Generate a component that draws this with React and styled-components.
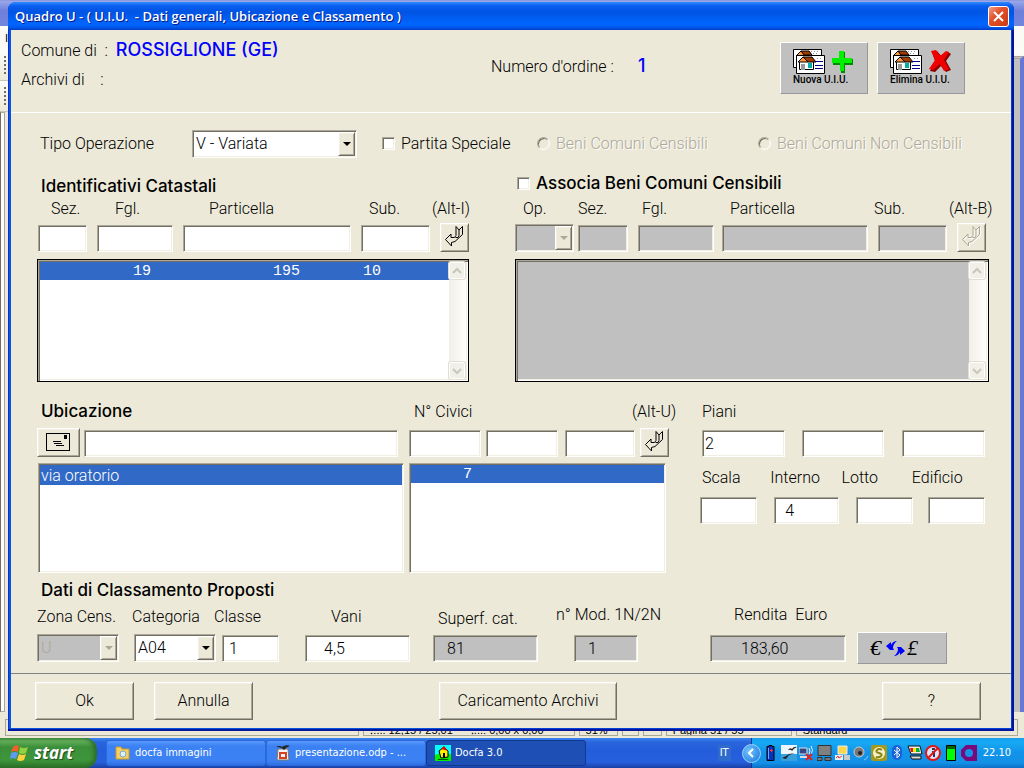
import React from "react";
import styled, { createGlobalStyle, css } from "styled-components";

const face = "#ece9d8";
const grey = "#c0c0c0";
const shade = "#aca899";
const dark = "#716f64";
const highlight = "#316ac6";

const GlobalStyle = createGlobalStyle`
  * {
    box-sizing: border-box;
  }

  body {
    margin: 0;
    background: ${face};
    color: #000;
    font: 300 16px/20px Roboto, "Liberation Sans", sans-serif;
  }

  button,
  input,
  select {
    margin: 0;
    border-radius: 0;
    color: inherit;
    font: inherit;
  }
`;

const sunken = css`
  border: 1px solid;
  border-color: ${shade} #fff #fff ${shade};
  box-shadow: inset 1px 1px 0 ${dark}, inset -1px -1px 0 #f1efe2;
`;

const raised = css`
  border: 1px solid;
  border-color: #fff ${dark} ${dark} #fff;
  box-shadow: inset 1px 1px 0 #f1efe2, inset -1px -1px 0 ${shade};
`;

const Page = styled.div`
  display: flex;
  flex-direction: column;
  min-height: 100vh;
`;

const Desktop = styled.main`
  position: relative;
  flex: 1;
  display: flex;
  padding: 2px 10px 7px 8px;
`;

/* application left open behind the dialog */

const Backdrop = styled.div`
  position: absolute;
  inset: 0;
  display: flex;
  flex-direction: column;
  overflow: hidden;
  background: ${face};
`;

const BackTitle = styled.div`
  height: 26px;
  border-top: 1px solid #8c9ae0;
  background: linear-gradient(#9aa8ea, #6d7edb 40%, #7386de);
`;

const BackMenu = styled.div`
  height: 24px;
  padding-left: 5px;
  background: #fbfaf6;
  font: 400 11px/24px "Liberation Sans", sans-serif;
`;

const BackTools = styled.div`
  height: 31px;
  padding: 6px 0 6px 4px;
  border-bottom: 1px solid #c9c6b6;
  background: linear-gradient(#fdfdfb, ${face});
`;

const Grip = styled.div`
  width: 2px;
  height: 100%;
  background: repeating-linear-gradient(${dark} 0 2px, transparent 2px 4px);
`;

const BackBody = styled.div`
  flex: 1;
  display: flex;
  justify-content: space-between;
`;

const BackRuler = styled.div`
  width: 5px;
  border: 1px solid ${shade};
  border-left-color: ${dark};
  background: #fff;
`;

const BackEdge = styled.div`
  width: 10px;
  margin-top: -56px;
  border-top: 3px double ${shade};
  border-right: 4px solid #6876d4;
  background: ${grey};
`;

const StatusBar = styled.div`
  display: grid;
  grid-template-columns: 354fr 211fr 39fr 17fr 19fr 126fr 222fr;
  column-gap: 4px;
  height: 26px;
  padding: 7px 6px 2px 5px;
  font: 400 11px/20px "Liberation Sans", sans-serif;
  white-space: nowrap;
`;

const StatusCell = styled.div`
  display: flex;
  gap: 18px;
  min-width: 0;
  padding: 0 6px;
  overflow: hidden;
  border: 1px solid ${shade};
`;

/* dialog */

const Dialog = styled.section`
  position: relative;
  flex: 1;
  display: flex;
  flex-direction: column;
  border-radius: 8px 8px 0 0;
  background: linear-gradient(
    90deg,
    #0831d9 0 1px,
    #0855dd 1px 50%,
    #0640d8 50% calc(100% - 2px),
    #001599 calc(100% - 2px)
  );
  box-shadow: inset 0 -2px 0 #001599;
`;

const TitleBar = styled.header`
  display: flex;
  align-items: center;
  justify-content: space-between;
  height: 28px;
  padding: 0 5px 0 7px;
  border-radius: 8px 8px 0 0;
  background: linear-gradient(
    #2f8dff 0,
    #0a5df0 4px,
    #0054e3 10px,
    #0066ff 22px,
    #005bf0 25px,
    #003dc8 28px
  );
`;

const Title = styled.h1`
  margin: 0;
  color: #fff;
  font: 600 13px/18px "Open Sans", sans-serif;
  text-shadow: 1px 1px 0 #0a1883;
  white-space: pre;
`;

const CloseButton = styled.button`
  display: grid;
  place-items: center;
  width: 21px;
  height: 21px;
  padding: 0;
  border: 1px solid #fff;
  border-radius: 3px;
  background: linear-gradient(135deg, #f0a088, #e2512c 40%, #c93a12);
`;

const Body = styled.form`
  flex: 1;
  display: flex;
  flex-direction: column;
  margin: 0 3px 3px;
  background: ${face};
`;

const Header = styled.div`
  display: grid;
  grid-template-columns: 1fr 289px auto;
  height: 83px;
  padding: 11px 46px 0 10px;
  border-bottom: 1px solid #fff;
`;

const HeaderLines = styled.div`
  display: flex;
  flex-direction: column;
  gap: 9px;
  white-space: pre;
`;

const Strong = styled.strong`
  margin-left: 4px;
  color: #00f;
  font: 500 18px/18px Inter, sans-serif;
`;

const OrderNumber = styled.div`
  display: flex;
  gap: 20px;
  padding-top: 16px;
`;

const ImageButtons = styled.div`
  display: flex;
  gap: 9px;
  padding-top: 1px;
`;

const ImageButton = styled.button`
  display: flex;
  flex-direction: column;
  width: 88px;
  height: 52px;
  padding: 6px 12px;
  border: 1px solid;
  border-color: #fff #98989c #98989c #fff;
  background: ${grey};
  font: 500 10px/12px Roboto, sans-serif;
  text-align: left;
  white-space: nowrap;
`;

const OperationRow = styled.div`
  display: grid;
  grid-template-columns: 152fr 190fr 155fr 221fr 242fr;
  align-items: center;
  height: 61px;
  padding: 0 11px 0 29px;
`;

const Choice = styled.label`
  display: flex;
  align-items: center;
  gap: 6px;
  white-space: nowrap;
  ${(p) =>
    p.$disabled &&
    css`
      color: ${shade};
      text-shadow: 1px 1px 0 #fff;
    `}

  input {
    appearance: none;
    width: 13px;
    height: 13px;
    background: #fff;
    ${sunken}
    ${(p) => p.$disabled && "background: #ece9d8; border-radius: 50%;"}
  }
`;

const Heading = styled.h2`
  margin: 0;
  color: #000;
  font: 500 17px/18px Inter, sans-serif;
`;

const Columns = styled.div`
  display: grid;
  grid-template-columns: 432fr 474fr;
  column-gap: 46px;
  padding: 0 22px 0 26px;
`;

const Panel = styled.section`
  display: flex;
  flex-direction: column;
`;

const PanelTitle = styled.div`
  height: 25px;
  padding: ${(p) => (p.$raise ? "0 2px" : "3px 4px 0")};
`;

const FieldGrid = styled.div`
  display: grid;
  grid-template-columns: ${(p) => p.$tracks};
  padding-left: ${(p) => p.$inset || 0}px;
`;

const Field = styled.div`
  display: flex;
  flex-direction: column;
  justify-content: space-between;
  min-width: 0;
  height: ${(p) => p.$height || 53}px;
  padding-right: ${(p) => p.$gap || 0}px;
`;

const FieldLabel = styled.label`
  margin-left: ${(p) => p.$indent || 0}px;
  white-space: pre;
`;

const Input = styled.input`
  width: 100%;
  height: 27px;
  padding: 0 0 0 ${(p) => p.$pad || 4}px;
  outline: 0;
  background: ${(p) => (p.$grey ? grey : "#fff")};
  ${sunken}
`;

const ComboBox = styled.div`
  display: flex;
  width: ${(p) => (p.$wide ? `${p.$wide}px` : "100%")};
  height: 28px;
  padding: 1px;
  background: ${(p) => (p.$disabled ? grey : "#fff")};
  color: ${(p) => (p.$disabled ? shade : "#000")};
  ${sunken}

  select {
    appearance: none;
    flex: 1;
    min-width: 0;
    padding: 0 2px;
    border: 0;
    outline: 0;
    opacity: 1;
    background: transparent;
    color: inherit;
  }
`;

const ComboArrow = styled.span`
  display: grid;
  place-items: center;
  width: 17px;
  background: ${face};
  pointer-events: none;
  ${raised}

  &::after {
    content: "";
    border: solid transparent;
    border-width: 4px 4px 0;
    border-top-color: ${(p) => (p.$disabled ? shade : "#000")};
  }
`;

const SmallButton = styled.button`
  display: grid;
  place-items: center;
  width: ${(p) => p.$wide || 29}px;
  height: 29px;
  padding: 0;
  background: ${face};
  color: ${(p) => (p.disabled ? shade : "#000")};
  ${raised}

  svg {
    filter: ${(p) => (p.disabled ? "drop-shadow(1px 1px 0 #fff)" : "none")};
  }
`;

const ListFrame = styled.div`
  display: flex;
  height: 123px;
  margin-top: 7px;
  padding: 2px;
  border: 1px solid #000;
  background: ${(p) => (p.$grey ? grey : "#fff")};
  box-shadow: inset 1px 1px 0 ${shade}, inset 2px 2px 0 ${dark},
    inset -1px -1px 0 #fff, inset -2px -2px 0 #f1efe2;
`;

const PlainList = styled.div`
  height: 110px;
  margin: 6px ${(p) => p.$gap}px 0 ${(p) => p.$inset || 0}px;
  padding: 1px;
  background: #fff;
  ${sunken}
`;

const List = styled.ul`
  flex: 1;
  margin: 0;
  padding: 0;
  list-style: none;
`;

const ListRow = styled.li`
  display: grid;
  grid-template-columns: ${(p) => p.$tracks || "1fr"};
  padding: 1px 1px 0;
  background: ${highlight};
  color: #fff;
  font: ${(p) =>
    p.$mono
      ? '400 15px/17px "Liberation Mono", monospace'
      : "300 16px/19px Roboto, sans-serif"};
`;

const ScrollBar = styled.div`
  display: flex;
  flex-direction: column;
  justify-content: space-between;
  width: 17px;
  background: linear-gradient(90deg, #f1efe8, #fefefb);
`;

const ScrollButton = styled.button`
  display: grid;
  place-items: center;
  width: 16px;
  height: 17px;
  padding: 0;
  border: 1px solid #fff;
  border-radius: 2px;
  background: #f1f0e8;
  box-shadow: 0 0 0 1px #e2dfd0;
  color: #c9c7ba;
`;

const LocationGrid = styled.div`
  display: grid;
  grid-template-columns: 372fr 291fr 290fr;
  padding: 20px 21px 0 26px;
`;

const Floors = styled.section`
  display: flex;
  flex-direction: column;
  gap: 11px;
  padding-right: 5px;
`;

const Classing = styled.section`
  padding: 8px 20px 0 26px;

  h2 {
    padding-left: 4px;
  }
`;

const ClassGrid = styled.div`
  display: grid;
  grid-template-columns: 97fr 88fr 83fr 128fr 141fr 136fr 147fr 134fr;
  align-items: end;
  margin-top: 6px;

  & > div {
    margin-bottom: 2px;
  }
`;

const CurrencyButton = styled(ImageButton)`
  width: 90px;
  height: 32px;
  padding: 3px 12px;
`;

const Footer = styled.footer`
  display: grid;
  grid-template-columns: 404fr 443fr 99px;
  margin-top: auto;
  padding: 8px 30px 8px 24px;
  border-top: 1px solid #808080;
`;

const ButtonGroup = styled.div`
  display: flex;
  gap: 20px;
`;

const PushButton = styled.button`
  width: ${(p) => (p.$wide ? 178 : 99)}px;
  height: 38px;
  background: ${face};
  ${raised}
`;

/* taskbar */

const TaskBar = styled.nav`
  display: flex;
  height: 30px;
  background: linear-gradient(
    #3a85f0 0,
    #2a66dd 4px,
    #245ddb 12px,
    #2660dd 24px,
    #1941a5 30px
  );
  color: #fff;
  font: 400 11px/14px "DejaVu Sans Condensed", "DejaVu Sans", sans-serif;
`;

const StartButton = styled.button`
  display: flex;
  align-items: center;
  gap: 5px;
  width: 97px;
  margin-right: 9px;
  padding: 0 0 0 10px;
  border: 0;
  border-radius: 0 12px 12px 0;
  background: linear-gradient(
    #4f9b4b 0,
    #62b05c 3px,
    #3c8f3a 9px,
    #3d963b 22px,
    #2b7029
  );
  box-shadow: inset -3px 0 4px #2a6b28;
  color: #fff;
  font: italic 700 17px/24px "Open Sans", sans-serif;
  text-shadow: 1px 1px 1px #1d4b1b;
`;

const Task = styled.button`
  display: flex;
  align-items: center;
  gap: 4px;
  width: 160px;
  height: 26px;
  margin-top: 2px;
  padding: 0 8px;
  border: 1px solid ${(p) => (p.$active ? "#12398f" : "#2b68dc")};
  border-radius: 3px;
  background: ${(p) =>
    p.$active
      ? "#1e4fb5"
      : "linear-gradient(#5a9bfb, #3c81f3 5px, #3c81f3 20px, #2f6fe2)"};
  white-space: nowrap;
`;

const Language = styled.span`
  align-self: center;
  margin: 0 20px 0 auto;
  padding: 1px 2px;
  background: #2f6bcc;
`;

const Tray = styled.div`
  display: flex;
  align-items: center;
  gap: 2px;
  padding-right: 13px;
  border-left: 1px solid #0b3c8c;
  background: linear-gradient(
    #1c9df0 0,
    #17aaf3 4px,
    #1194ea 14px,
    #1290e6 25px,
    #0d6fc4
  );
`;

const TrayToggle = styled.button`
  display: grid;
  place-items: center;
  width: 19px;
  height: 19px;
  margin-left: -10px;
  padding: 0;
  border: 1px solid #9fd4fb;
  border-radius: 50%;
  background: radial-gradient(circle at 6px 6px, #6fc3fb, #1a74dd);
`;

const Clock = styled.time`
  margin-left: 4px;
`;

const ReturnIcon = () => (
  <svg width="27" height="27" viewBox="1 1 27 27" fill="none" stroke="currentColor">
    <path d="M5.5 16.5 11 11v3.500h3.500l1.500-2V3.500l3 3.500 3.500-3.500v8L15 18.500l-3.500 1V23Z" />
    <path d="M15.500 14.500h2.500l1-2V7" />
  </svg>
);

const EnvelopeIcon = () => (
  <svg width="25" height="19" viewBox="0 0 25 19" stroke="#000" fill="none">
    <rect x="0.5" y="0.5" width="23" height="17" />
    <path d="M7 8.500h8M8 10.500h8M10 12.500h8" />
    <path d="M18 2h3v4h-3z" fill="#000" stroke="none" />
  </svg>
);

const House = () => (
  <>
    <path d="M.5.5h28v18H.5z" fill="#fff" stroke="#000" />
    <path d="m3 7 5-5 5 5z" fill="#ff9a3c" stroke="#000" />
    <path d="M8 2h8l3 4h-8z" fill="#a03c00" stroke="#000" />
    <path d="M18 2.500h8M20 4.500h6" stroke="#999" strokeDasharray="1 2" />
    <path d="M3.500 6.500h28v18h-28z" fill="#fff" stroke="#000" />
    <path d="M6.500 12.500h14v8h-14z" fill="#fff" stroke="#000" />
    <path d="m5 13 5-5 5 5z" fill="#ff9a3c" stroke="#000" />
    <path d="M10 8h9l4 5h-8z" fill="#a03c00" stroke="#000" />
    <path d="M8 15h4v6H8z" fill="#999" />
    <path d="M15 14h4v5h-4z" fill="#00b0a8" />
    <path d="M24 9.500h6" stroke="#999" strokeDasharray="1 2" />
    <path d="M22 12.500h8M22 16.500h8M22 19.500h8" stroke="#00008b" />
  </>
);

const NewIcon = () => (
  <svg width="62" height="25" viewBox="0 0 62 25">
    <House />
    <path d="M47 3h5v7h8v6h-8v8h-4v-8h-8v-4h7z" fill="#008a00" />
    <path d="M46 2h5v7h8v5h-8v8h-4v-8h-8V9h7z" fill="#00f000" />
  </svg>
);

const DeleteIcon = () => (
  <svg width="62" height="25" viewBox="0 0 62 25">
    <House />
    <path d="m42 3 5-1 5 6 6-5 3 2-5 7 5 9-5 2-5-6-6 6-5-1 5-10z" fill="#8b0000" />
    <path d="m41 2 5-1 4 6 6-5 3 1-5 8 5 9-5 2-4-7-7 6-4-1 6-9z" fill="#f00000" />
  </svg>
);

const swapArrow = "m16 10 5-4v3q2-4 6-4-4 3-4 7l1 2h-4z";

const CurrencyIcon = () => (
  <svg
    width="52"
    height="24"
    viewBox="0 0 52 24"
    fontFamily="Liberation Serif"
    fontStyle="italic"
    fontWeight="400"
    fontSize="22"
  >
    <text x="0" y="19">€</text>
    <path d={swapArrow} fill="#00f" />
    <path d={swapArrow} fill="#00f" transform="rotate(180 25.5 12.5)" />
    <text x="37" y="19">£</text>
  </svg>
);

const Chevron = ({ down }) => (
  <svg width="10" height="8" viewBox="0 0 10 8" fill="none" stroke="currentColor" strokeWidth="2">
    <path d={down ? "m1 2 4 4 4-4" : "m1 6 4-4 4 4"} />
  </svg>
);

const Flag = () => (
  <svg width="19" height="18" viewBox="0 0 19 18">
    <path d="M3 3q3-3 6-1L8 8Q5 6 1 8z" fill="#f0602c" />
    <path d="M10 3q4 2 8 0l-2 6q-4 2-7 0z" fill="#8fd13f" />
    <path d="M1 9q4-2 7 0l-2 6q-3-2-6 0z" fill="#5d9bf0" />
    <path d="M9 10q3 2 7 0l-2 6q-4 2-7 0z" fill="#ffd23c" />
  </svg>
);

const trayIcons = [
  <g key="battery">
    <path d="M4 1.500h2v-1h3v1h2v14H4z" fill="#0a32b8" stroke="#000" />
    <path d="M5 3h1v11H5z" fill="#6fa8ff" />
    <path d="M7 5.500h3M8.500 4v3" stroke="#f33" />
  </g>,
  <g key="office">
    <path d="M0 0h16v16H0z" fill="#eef6fb" />
    <path d="M0 9h16v7H0z" fill="#3aa0dc" />
    <path d="M7 5q2-3 4-1 2-3 5-2-3 1-5 4-1-2-4-1M1 13q5-2 7-4l6-1-6 2-3 4z" fill="#222" />
  </g>,
  <g key="network">
    <path d="M0 3h8v6H0z" fill="#35477e" stroke="#dfe4f4" />
    <path d="M1 11h7v2H1z" fill="#ddd" />
    <path d="M10 3q2 3 0 6M12 1q3 4 0 9" fill="none" stroke="#eee" />
    <path d="m7 9 6 6m0-6-6 6" stroke="#d22" strokeWidth="2" />
  </g>,
  <g key="display">
    <path d="M1 .5h13v10H1z" fill="#808080" stroke="#333" />
    <path d="M0 12.500h5v3H0zM8 12.500h6v3H8z" fill="#777" stroke="#333" />
  </g>,
  <g key="power">
    <path d="M3 1h9v8H3z" fill="#ffd54a" stroke="#eee" />
    <path d="M0 10h8v5H0z" fill="#eee" />
    <path d="m1 13 2-2 1 2 3-2" stroke="#e33" fill="none" />
    <path d="M9 10h6v5H9z" fill="#c9c9c9" />
  </g>,
  <g key="volume">
    <circle cx="6" cy="7" r="5" fill="#777" stroke="#ccc" />
    <circle cx="7" cy="8" r="2" fill="#222" />
    <path d="M11 15q3-1 4-4" stroke="#8ec8ff" fill="none" />
  </g>,
  <g key="sync">
    <rect width="16" height="16" rx="2" fill="#a39a1c" />
    <circle cx="8" cy="8" r="6" fill="#f3f0cc" />
    <path d="M11 5Q8 3 6 5t2 3 2 3-5 1" stroke="#8d8410" strokeWidth="2" fill="none" />
  </g>,
  <g key="bluetooth">
    <rect x="3" y="0" width="10" height="15" rx="5" fill="#1762d8" />
    <path d="m5 5 6 5-3 3V2l3 3-6 5" stroke="#fff" fill="none" />
  </g>,
  <g key="graphics">
    <path d="M1 1h12l2 8H4z" fill="#eee" stroke="#111" />
    <path d="M3 3h3v4H4z" fill="#e11" />
    <path d="M6 3h3v4H6z" fill="#ee1" />
    <path d="M9 3h3l1 4H9z" fill="#1a3" />
    <path d="M3 11h11v3H5z" fill="#ddd" stroke="#111" />
  </g>,
  <g key="blocked">
    <circle cx="8" cy="8" r="7" fill="#dbe4f8" stroke="#e01818" strokeWidth="2" />
    <path d="M7 4h3M7 7h2v5" stroke="#335" strokeWidth="2" fill="none" />
    <path d="M13 3 3 13" stroke="#e01818" strokeWidth="2" />
  </g>,
  <g key="meter">
    <path d="M3.500.5h9v15h-9z" fill="#060" stroke="#000" />
    <path d="M4 4h8v11H4z" fill="#0f0" />
  </g>,
  <g key="assistant">
    <path d="M0 5 5 0h11v16H5l-5-5z" fill="#7a0a7c" />
    <circle cx="8" cy="8" r="4" fill="#1492e8" />
  </g>,
];

const TextField = ({ id, label, indent, gap, height, inputLabel, ...rest }) => (
  <Field $gap={gap} $height={height}>
    <FieldLabel htmlFor={id} $indent={indent}>
      {label}
    </FieldLabel>
    <Input id={id} aria-label={inputLabel} {...rest} />
  </Field>
);

const Combo = ({ id, value, wide, disabled }) => (
  <ComboBox $wide={wide} $disabled={disabled}>
    <select id={id} disabled={disabled} defaultValue={value}>
      <option>{value}</option>
    </select>
    <ComboArrow $disabled={disabled} />
  </ComboBox>
);

const InsertButton = ({ hint, label, height, indent, disabled }) => (
  <Field $height={height}>
    <FieldLabel as="span" $indent={indent}>
      {hint}
    </FieldLabel>
    <SmallButton type="button" aria-label={label} disabled={disabled}>
      <ReturnIcon />
    </SmallButton>
  </Field>
);

const Scroll = () => (
  <ScrollBar>
    <ScrollButton type="button" aria-label="Su">
      <Chevron />
    </ScrollButton>
    <ScrollButton type="button" aria-label="Giù">
      <Chevron down />
    </ScrollButton>
  </ScrollBar>
);

const Background = () => (
  <Backdrop>
    <BackTitle />
    <BackMenu>I</BackMenu>
    <BackTools>
      <Grip />
    </BackTools>
    <BackTools>
      <Grip />
    </BackTools>
    <BackBody>
      <BackRuler />
      <BackEdge />
    </BackBody>
    <StatusBar>
      <StatusCell />
      <StatusCell>
        <span>⁝...: 12,15 / 25,01</span>
        <span>⁝...: 0,00 x 0,00</span>
      </StatusCell>
      <StatusCell>51%</StatusCell>
      <StatusCell />
      <StatusCell />
      <StatusCell>Pagina 51 / 55</StatusCell>
      <StatusCell>Standard</StatusCell>
    </StatusBar>
  </Backdrop>
);

const DialogHeader = () => (
  <Header>
    <HeaderLines>
      <div>
        {"Comune di  : "}
        <Strong>ROSSIGLIONE (GE)</Strong>
      </div>
      <div>{"Archivi di    :"}</div>
    </HeaderLines>
    <OrderNumber>
      <span>Numero d'ordine :</span>
      <Strong>1</Strong>
    </OrderNumber>
    <ImageButtons>
      <ImageButton type="button">
        <NewIcon />
        Nuova U.I.U.
      </ImageButton>
      <ImageButton type="button">
        <DeleteIcon />
        Elimina U.I.U.
      </ImageButton>
    </ImageButtons>
  </Header>
);

const Operation = () => (
  <OperationRow>
    <label htmlFor="tipo">Tipo Operazione</label>
    <Combo id="tipo" value="V - Variata" wide={165} />
    <Choice>
      <input type="checkbox" />
      Partita Speciale
    </Choice>
    <Choice $disabled>
      <input type="radio" name="beni" disabled />
      Beni Comuni Censibili
    </Choice>
    <Choice $disabled>
      <input type="radio" name="beni" disabled />
      Beni Comuni Non Censibili
    </Choice>
  </OperationRow>
);

const Identification = () => (
  <Columns>
    <Panel>
      <PanelTitle>
        <Heading>Identificativi Catastali</Heading>
      </PanelTitle>
      <FieldGrid $tracks="59fr 86fr 178fr 79fr 29px" $inset={1}>
        <TextField id="sez" label="Sez." indent={13} gap={10} />
        <TextField id="fgl" label="Fgl." indent={18} gap={10} />
        <TextField id="particella" label="Particella" indent={26} gap={10} />
        <TextField id="sub" label="Sub." indent={8} gap={10} />
        <InsertButton hint="(Alt-I)" indent={-8} label="Inserisci identificativo" />
      </FieldGrid>
      <ListFrame>
        <List>
          <ListRow $mono $tracks="92px 140px 90px 1fr">
            <span />
            <span>19</span>
            <span>195</span>
            <span>10</span>
          </ListRow>
        </List>
        <Scroll />
      </ListFrame>
    </Panel>
    <Panel>
      <PanelTitle $raise>
        <Choice>
          <input type="checkbox" />
          <Heading as="span">Associa Beni Comuni Censibili</Heading>
        </Choice>
      </PanelTitle>
      <FieldGrid $tracks="63fr 60fr 84fr 156fr 79fr 32px">
        <Field $gap={4}>
          <FieldLabel htmlFor="bcc-op" $indent={8}>
            Op.
          </FieldLabel>
          <Combo id="bcc-op" value="" disabled />
        </Field>
        <TextField id="bcc-sez" label="Sez." gap={10} $grey disabled />
        <TextField id="bcc-fgl" label="Fgl." indent={4} gap={8} $grey disabled />
        <TextField id="bcc-particella" label="Particella" indent={8} gap={10} $grey disabled />
        <TextField id="bcc-sub" label="Sub." indent={-4} gap={10} $grey disabled />
        <InsertButton hint="(Alt-B)" indent={-8} label="Inserisci bene comune" disabled />
      </FieldGrid>
      <ListFrame $grey>
        <List />
        <Scroll />
      </ListFrame>
    </Panel>
  </Columns>
);

const Location = () => (
  <LocationGrid>
    <Panel>
      <Field $height={55}>
        <FieldLabel htmlFor="via" $indent={4}>
          <Heading as="span">Ubicazione</Heading>
        </FieldLabel>
        <FieldGrid $tracks="47px 1fr">
          <SmallButton type="button" $wide={43} aria-label="Stradario">
            <EnvelopeIcon />
          </SmallButton>
          <Field $height={29} $gap={11}>
            <span />
            <Input id="via" />
          </Field>
        </FieldGrid>
      </Field>
      <PlainList $inset={1} $gap={5}>
        <List>
          <ListRow>via oratorio</ListRow>
        </List>
      </PlainList>
    </Panel>
    <Panel>
      <FieldGrid $tracks="77fr 79fr 75fr 60fr">
        <TextField id="civico-1" label="N° Civici" indent={5} gap={5} height={55} />
        <TextField id="civico-2" label="" gap={7} height={55} inputLabel="Civico 2" />
        <TextField id="civico-3" label="" gap={5} height={55} inputLabel="Civico 3" />
        <InsertButton hint="(Alt-U)" indent={-8} height={55} label="Inserisci civico" />
      </FieldGrid>
      <PlainList $gap={34}>
        <List>
          <ListRow $mono $tracks="51px 1fr">
            <span />
            <span>7</span>
          </ListRow>
        </List>
      </PlainList>
    </Panel>
    <Floors>
      <FieldGrid $tracks="100fr 101fr 83fr" $inset={2}>
        <TextField id="piano-1" label="Piani" height={55} gap={17} defaultValue="2" $pad={2} />
        <TextField id="piano-2" label="" height={55} gap={18} inputLabel="Piano 2" />
        <TextField id="piano-3" label="" height={55} inputLabel="Piano 3" />
      </FieldGrid>
      <FieldGrid $tracks="74fr 81fr 72fr 57fr">
        <TextField id="scala" label="Scala" indent={2} height={56} gap={17} />
        <TextField id="interno" label="Interno" indent={-4} height={56} gap={17} defaultValue="4" $pad={10} />
        <TextField id="lotto" label="Lotto" indent={-14} height={56} gap={15} />
        <TextField id="edificio" label="Edificio" indent={-16} height={56} />
      </FieldGrid>
    </Floors>
  </LocationGrid>
);

const Classification = () => (
  <Classing>
    <Heading>Dati di Classamento Proposti</Heading>
    <ClassGrid>
      <Field $gap={15} $height={55}>
        <FieldLabel htmlFor="zona">Zona Cens.</FieldLabel>
        <Combo id="zona" value="U" disabled />
      </Field>
      <Field $gap={6} $height={55}>
        <FieldLabel htmlFor="categoria" $indent={-2}>
          Categoria
        </FieldLabel>
        <Combo id="categoria" value="A04" />
      </Field>
      <TextField id="classe" label="Classe" indent={-8} gap={26} height={55} defaultValue="1" $pad={6} />
      <TextField id="vani" label="Vani" indent={26} gap={23} height={55} defaultValue="4,5" $pad={18} />
      <TextField id="superficie" label="Superf. cat." indent={5} gap={36} height={53} defaultValue="81" $pad={13} $grey readOnly />
      <TextField id="mod" label="n° Mod. 1N/2N" indent={-18} gap={72} height={57} defaultValue="1" $pad={13} $grey readOnly />
      <TextField id="rendita" label="Rendita  Euro" indent={24} gap={11} height={57} defaultValue="183,60" $pad={30} $grey readOnly />
      <CurrencyButton type="button" aria-label="Converti euro e lire">
        <CurrencyIcon />
      </CurrencyButton>
    </ClassGrid>
  </Classing>
);

const Tasks = () => (
  <TaskBar>
    <StartButton type="button">
      <Flag />
      start
    </StartButton>
    <Task type="button">
      <svg width="16" height="16" viewBox="0 0 16 16">
        <path d="M1 2h5l1 2h7v10H1z" fill="#f7cf62" stroke="#c79a2b" />
        <circle cx="8" cy="9" r="3" fill="#dff0fb" stroke="#7aa8c8" />
      </svg>
      docfa immagini
    </Task>
    <Task type="button">
      <svg width="16" height="16" viewBox="0 0 16 16">
        <path d="M3 4h10l1 11H2z" fill="#f4f4f4" stroke="#777" />
        <path d="M1 2q4-2 6 0 4-3 8-1-4 1-6 4-2-3-8-3" fill="#222" />
        <path d="M5 8h6v5H5z" fill="none" stroke="#d5421f" strokeWidth="2" />
      </svg>
      presentazione.odp - ...
    </Task>
    <Task type="button" $active>
      <svg width="16" height="16" viewBox="0 0 16 16">
        <path d="M0 0h16v16H0z" fill="#0ff" />
        <path d="M0 10q6-3 16-1v7H0z" fill="#0e0" />
        <path d="m4 6 5-4 4 4v6l-7 1z" fill="#fe0" stroke="#000" />
        <path d="m6 4 3-3 4 5-3-1z" fill="#e00" />
        <path d="M8 8h2v4H8z" />
        <path d="M3 14h9l2 1H3z" fill="#050" />
      </svg>
      Docfa 3.0
    </Task>
    <Language>IT</Language>
    <Tray>
      <TrayToggle type="button" aria-label="Mostra icone">
        <svg width="8" height="10" viewBox="0 0 8 10" fill="none" stroke="#fff" strokeWidth="2">
          <path d="M6 1 2 5l4 4" />
        </svg>
      </TrayToggle>
      {trayIcons.map((icon) => (
        <svg key={icon.key} width="16" height="16" viewBox="0 0 16 16">
          {icon}
        </svg>
      ))}
      <Clock>22.10</Clock>
    </Tray>
  </TaskBar>
);

const App = () => (
  <Page>
    <GlobalStyle />
    <Desktop>
      <Background />
      <Dialog>
        <TitleBar>
          <Title>
            {"Quadro U - ( U.I.U.  - Dati generali, Ubicazione e Classamento )"}
          </Title>
          <CloseButton type="button" aria-label="Chiudi">
            <svg width="13" height="13" viewBox="0 0 13 13" stroke="#fff" strokeWidth="2">
              <path d="m2 2 9 9m0-9-9 9" />
            </svg>
          </CloseButton>
        </TitleBar>
        <Body onSubmit={(e) => e.preventDefault()}>
          <DialogHeader />
          <Operation />
          <Identification />
          <Location />
          <Classification />
          <Footer>
            <ButtonGroup>
              <PushButton type="submit">Ok</PushButton>
              <PushButton type="button">Annulla</PushButton>
            </ButtonGroup>
            <PushButton type="button" $wide>
              Caricamento Archivi
            </PushButton>
            <PushButton type="button">?</PushButton>
          </Footer>
        </Body>
      </Dialog>
    </Desktop>
    <Tasks />
  </Page>
);

export default App;
